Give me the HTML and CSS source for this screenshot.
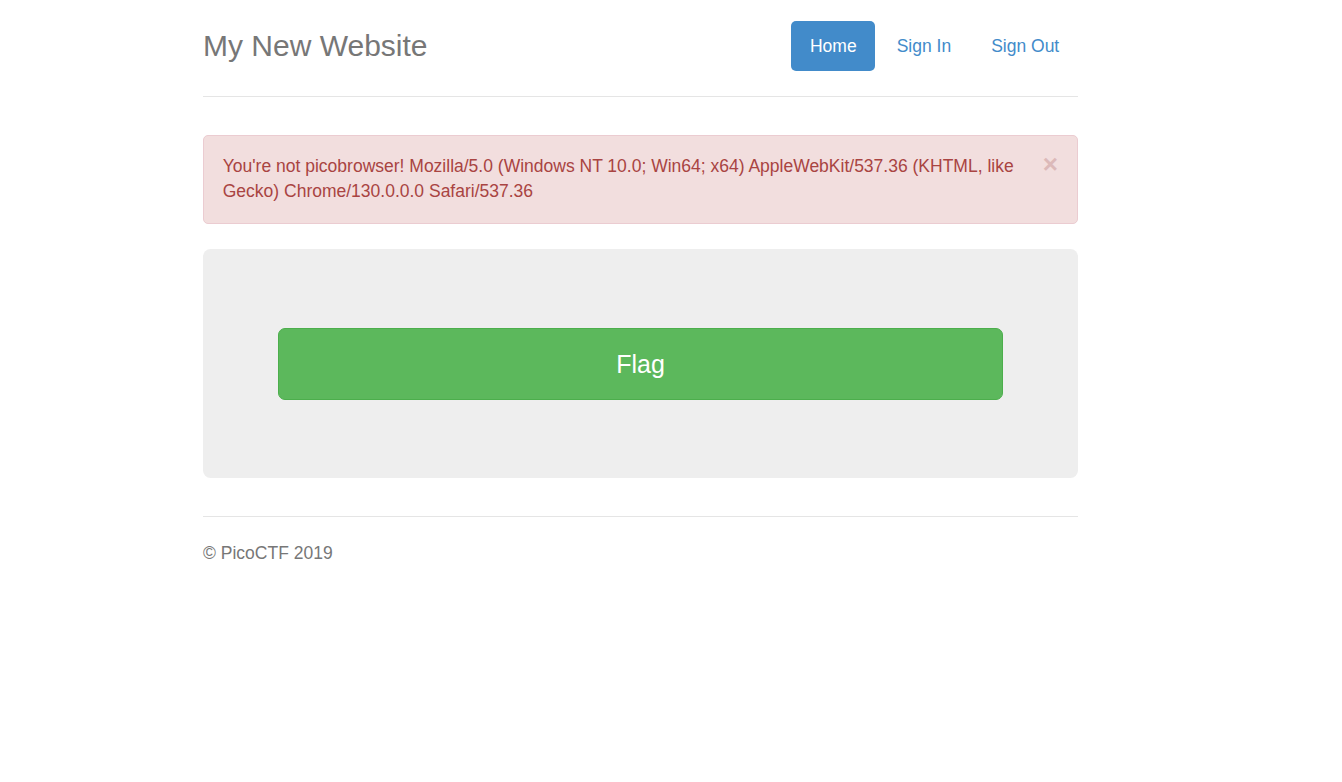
FILE: index.html
```html
<!DOCTYPE html>
<html lang="en">
<head>
<meta charset="utf-8">
<title>My New Website</title>
<link rel="stylesheet" href="styles.css">
</head>
<body>
<div class="container">
  <header class="header">
    <h3 class="brand">My New Website</h3>
    <nav class="nav">
      <a class="pill active" href="#">Home</a>
      <a class="pill" href="#">Sign In</a>
      <a class="pill" href="#">Sign Out</a>
    </nav>
  </header>

  <div class="alert">
    <span class="close">×</span>
    You're not picobrowser! Mozilla/5.0 (Windows NT 10.0; Win64; x64) AppleWebKit/537.36 (KHTML, like Gecko) Chrome/130.0.0.0 Safari/537.36
  </div>

  <div class="jumbotron">
    <a class="btn-flag" href="#">Flag</a>
  </div>

  <footer class="footer">
    <p>© PicoCTF 2019</p>
  </footer>
</div>
</body>
</html>
```

FILE: styles.css
```css
html, body {
  margin: 0;
  padding: 0;
  background: #fff;
}
body {
  font-family: "Liberation Sans", Arial, Helvetica, sans-serif;
  font-size: 17.5px;
  line-height: 25px;
  color: #333;
}
.container {
  width: 875px;
  margin-left: 203px;
  padding-top: 21px;
}
.header {
  display: flex;
  justify-content: space-between;
  align-items: center;
  padding-bottom: 25px;
  border-bottom: 1px solid #e5e5e5;
  margin-bottom: 38px;
}
.brand {
  margin: 0;
  font-size: 30px;
  line-height: 50px;
  font-weight: 400;
  color: #777;
}
.nav {
  display: flex;
  gap: 2.5px;
}
.pill {
  display: block;
  padding: 12.5px 18.75px;
  border-radius: 5px;
  color: #428bca;
  text-decoration: none;
  line-height: 25px;
}
.pill.active {
  background: #428bca;
  color: #fff;
}
.alert {
  position: relative;
  background: #f2dede;
  border: 1px solid #ebccd1;
  color: #a94442;
  border-radius: 5px;
  padding: 18px 43.75px 19px 18.75px;
  margin-bottom: 25px;
}
.close {
  position: absolute;
  right: 19px;
  top: 16px;
  font-size: 26px;
  font-weight: 700;
  line-height: 25px;
  color: #dcb9b9;
}
.jumbotron {
  background: #eee;
  border-radius: 7.5px;
  padding: 79px 75px 78px;
  text-align: center;
}
.btn-flag {
  display: flex;
  align-items: center;
  justify-content: center;
  height: 70px;
  background: #5cb85c;
  border: 1px solid #4cae4c;
  border-radius: 7px;
  color: #fff;
  font-size: 25px;
  text-decoration: none;
}
.footer {
  margin-top: 38px;
  border-top: 1px solid #e5e5e5;
  padding-top: 24px;
  color: #777;
}
.footer p {
  margin: 0;
}
```
